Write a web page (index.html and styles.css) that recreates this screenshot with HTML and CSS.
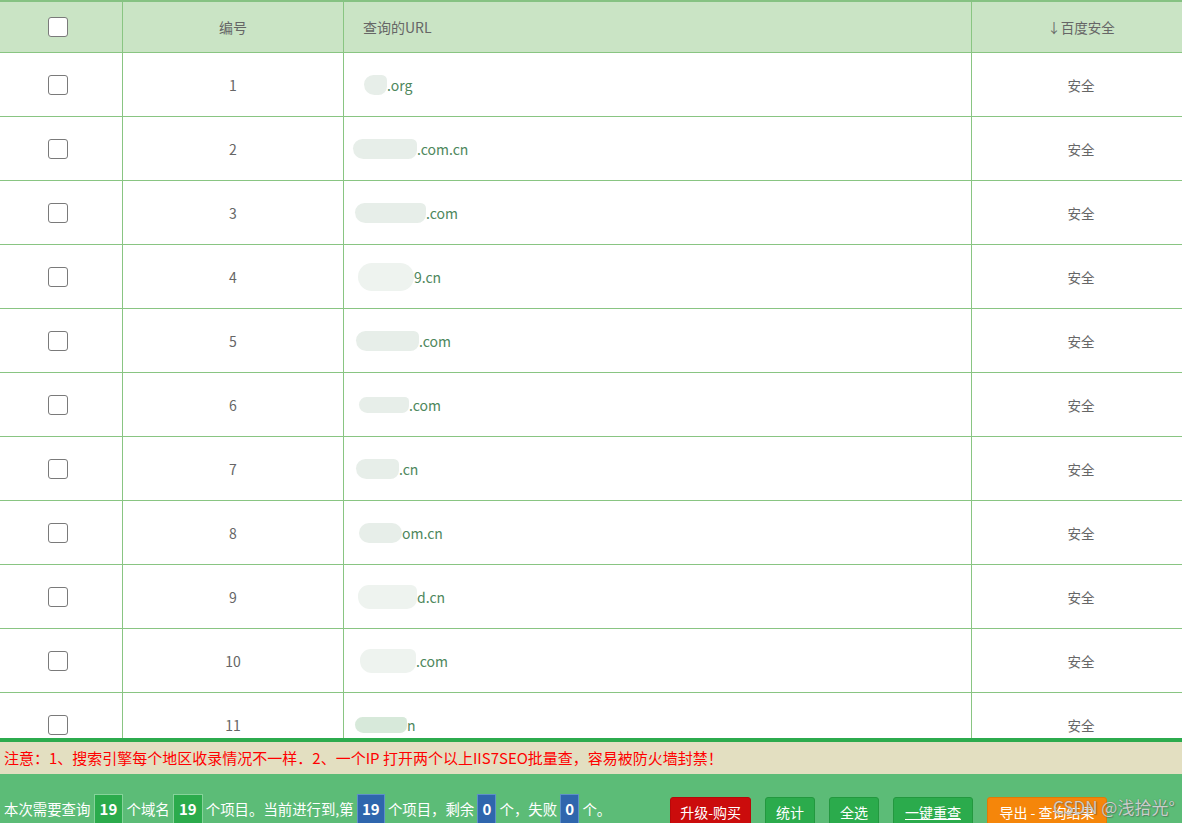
FILE: index.html
```html
<!DOCTYPE html>
<html lang="zh-CN">
<head>
<meta charset="utf-8">
<title>IIS7SEO批量查</title>
<link rel="stylesheet" href="styles.css">
</head>
<body>
<div class="page">
  <div class="grid-wrap">
    <div class="row head">
      <div class="cell c-check"><input type="checkbox" class="cb"></div>
      <div class="cell c-num">编号</div>
      <div class="cell c-url">查询的URL</div>
      <div class="cell c-safe">↓百度安全</div>
    </div>
    <div class="row"><div class="cell c-check"><input type="checkbox" class="cb"></div><div class="cell c-num">1</div><div class="cell c-url"><span class="mask m1"></span>.org</div><div class="cell c-safe">安全</div></div>
    <div class="row"><div class="cell c-check"><input type="checkbox" class="cb"></div><div class="cell c-num">2</div><div class="cell c-url"><span class="mask m2"></span>.com.cn</div><div class="cell c-safe">安全</div></div>
    <div class="row"><div class="cell c-check"><input type="checkbox" class="cb"></div><div class="cell c-num">3</div><div class="cell c-url"><span class="mask m3"></span>.com</div><div class="cell c-safe">安全</div></div>
    <div class="row"><div class="cell c-check"><input type="checkbox" class="cb"></div><div class="cell c-num">4</div><div class="cell c-url"><span class="mask m4"></span>9.cn</div><div class="cell c-safe">安全</div></div>
    <div class="row"><div class="cell c-check"><input type="checkbox" class="cb"></div><div class="cell c-num">5</div><div class="cell c-url"><span class="mask m5"></span>.com</div><div class="cell c-safe">安全</div></div>
    <div class="row"><div class="cell c-check"><input type="checkbox" class="cb"></div><div class="cell c-num">6</div><div class="cell c-url"><span class="mask m6"></span>.com</div><div class="cell c-safe">安全</div></div>
    <div class="row"><div class="cell c-check"><input type="checkbox" class="cb"></div><div class="cell c-num">7</div><div class="cell c-url"><span class="mask m7"></span>.cn</div><div class="cell c-safe">安全</div></div>
    <div class="row"><div class="cell c-check"><input type="checkbox" class="cb"></div><div class="cell c-num">8</div><div class="cell c-url"><span class="mask m8"></span>om.cn</div><div class="cell c-safe">安全</div></div>
    <div class="row"><div class="cell c-check"><input type="checkbox" class="cb"></div><div class="cell c-num">9</div><div class="cell c-url"><span class="mask m9"></span>d.cn</div><div class="cell c-safe">安全</div></div>
    <div class="row"><div class="cell c-check"><input type="checkbox" class="cb"></div><div class="cell c-num">10</div><div class="cell c-url"><span class="mask m10"></span>.com</div><div class="cell c-safe">安全</div></div>
    <div class="row"><div class="cell c-check"><input type="checkbox" class="cb"></div><div class="cell c-num">11</div><div class="cell c-url"><span class="mask m11"></span>n</div><div class="cell c-safe">安全</div></div>
  </div>
  <div class="notice">注意：1、搜索引擎每个地区收录情况不一样．2、一个IP 打开两个以上IIS7SEO批量查，容易被防火墙封禁！</div>
  <div class="footer">
    <div class="status">本次需要查询 <span class="badge green">19</span> 个域名 <span class="badge green">19</span> 个项目。当前进行到,第 <span class="badge blue">19</span> 个项目，剩余 <span class="badge blue">0</span> 个，失败 <span class="badge blue">0</span> 个。</div>
    <div class="actions">
      <button class="btn red">升级-购买</button>
      <button class="btn green">统计</button>
      <button class="btn green">全选</button>
      <button class="btn green under">一键重查</button>
      <button class="btn orange">导出 - 查询结果</button>
    </div>
    <div class="watermark">CSDN @浅拾光°</div>
  </div>
</div>
</body>
</html>
```

FILE: styles.css
```css
* { box-sizing: border-box; }
html, body { margin: 0; padding: 0; }
body {
  width: 1182px;
  height: 823px;
  overflow: hidden;
  font-family: "Noto Sans CJK SC", "Microsoft YaHei", sans-serif;
  font-size: 14px;
  color: #666;
  background: #fff;
}
.page { display: flex; flex-direction: column; height: 823px; }
.grid-wrap {
  height: 742px;
  overflow: hidden;
  border-top: 2px solid #86c283;
  border-bottom: 4px solid #2cab4d;
  flex: none;
}
.row {
  display: grid;
  grid-template-columns: 122px 221px 628px 211px;
  height: 64px;
  border-bottom: 1px solid #89c582;
}
.row.head { height: 51px; background: #cae4c5; }
.cell {
  display: flex;
  align-items: center;
  justify-content: center;
  line-height: 20px;
  font-size: 14px;
  color: #666;
}
.cell + .cell { border-left: 1px solid #89c582; }
.c-check { padding-right: 6px; }
.c-url { justify-content: flex-start; padding-left: 19px; color: #4d875c; }
.head .c-url { color: #666; }
.c-safe { font-size: 13.5px; padding-left: 8px; }
.cb {
  -webkit-appearance: none;
  appearance: none;
  width: 20px;
  height: 20px;
  margin: 0;
  border: 1.5px solid #7a7a7a;
  border-radius: 3px;
  background: #fff;
}
.mask {
  display: inline-block;
  height: 20px;
  background: #e7eee9;
  border-radius: 11px 6px 10px 12px;
}
.m1 { width: 23px; margin-left: 1px; }
.m2 { width: 64px; margin-left: -10px; }
.m3 { width: 71px; margin-left: -8px; }
.m4 { width: 56px; margin-left: -5px; height: 28px; border-radius: 14px; background: #eef3ef; }
.m5 { width: 63px; margin-left: -7px; }
.m6 { width: 50px; margin-left: -4px; height: 16px; }
.m7 { width: 43px; margin-left: -7px; }
.m8 { width: 43px; margin-left: -4px; border-radius: 10px; }
.m9 { width: 59px; margin-left: -5px; height: 24px; background: #eef3ef; }
.m10 { width: 56px; margin-left: -3px; height: 24px; background: #eef3ef; }
.m11 { width: 52px; margin-left: -8px; height: 16px; background: #d7e9da; }

.notice {
  height: 32px;
  background: #e3dfc1;
  color: #f00;
  font-size: 15px;
  line-height: 32px;
  padding-left: 4px;
  white-space: nowrap;
  flex: none;
}
.footer {
  position: relative;
  flex: 1;
  background: #5cbc77;
  display: flex;
  align-items: flex-start;
  padding-top: 20px;
  overflow: hidden;
}
.status {
  color: #fff;
  font-size: 14.4px;
  line-height: 30px;
  padding-left: 4px;
  white-space: nowrap;
}
.badge {
  display: inline-block;
  height: 30px;
  line-height: 28px;
  padding: 0 5px;
  font-weight: bold;
  font-size: 15px;
  vertical-align: top;
  border: 1px solid #86d39a;
}
.badge.green { background: #2bab4c; }
.badge.blue { background: #2f66ad; border-color: #5d8fc9; padding: 0 4px; }
.actions {
  display: flex;
  gap: 14px;
  margin-left: auto;
  margin-right: 75px;
  margin-top: 3px;
}
.btn {
  height: 30px;
  padding: 0 9px;
  border-radius: 3px;
  font-family: inherit;
  font-size: 14px;
  line-height: 26px;
  color: #fff;
  border: 1px solid;
  white-space: nowrap;
}
.btn.red { background: #cb0c0c; border-color: #b70909; min-width: 80px; }
.btn.green { background: #2bab4c; border-color: #23983f; min-width: 50px; }
.btn.orange { background: #f5860a; border-color: #e27a05; min-width: 120px; }
.btn.under { text-decoration: underline; min-width: 80px; }
.watermark {
  position: absolute;
  left: 1053px;
  top: 20px;
  font-size: 17px;
  color: rgba(225, 225, 225, 0.85);
  text-shadow: 0 0 1px rgba(60, 60, 60, 0.6), 1px 1px 1px rgba(60, 60, 60, 0.35);
  white-space: nowrap;
}
```
